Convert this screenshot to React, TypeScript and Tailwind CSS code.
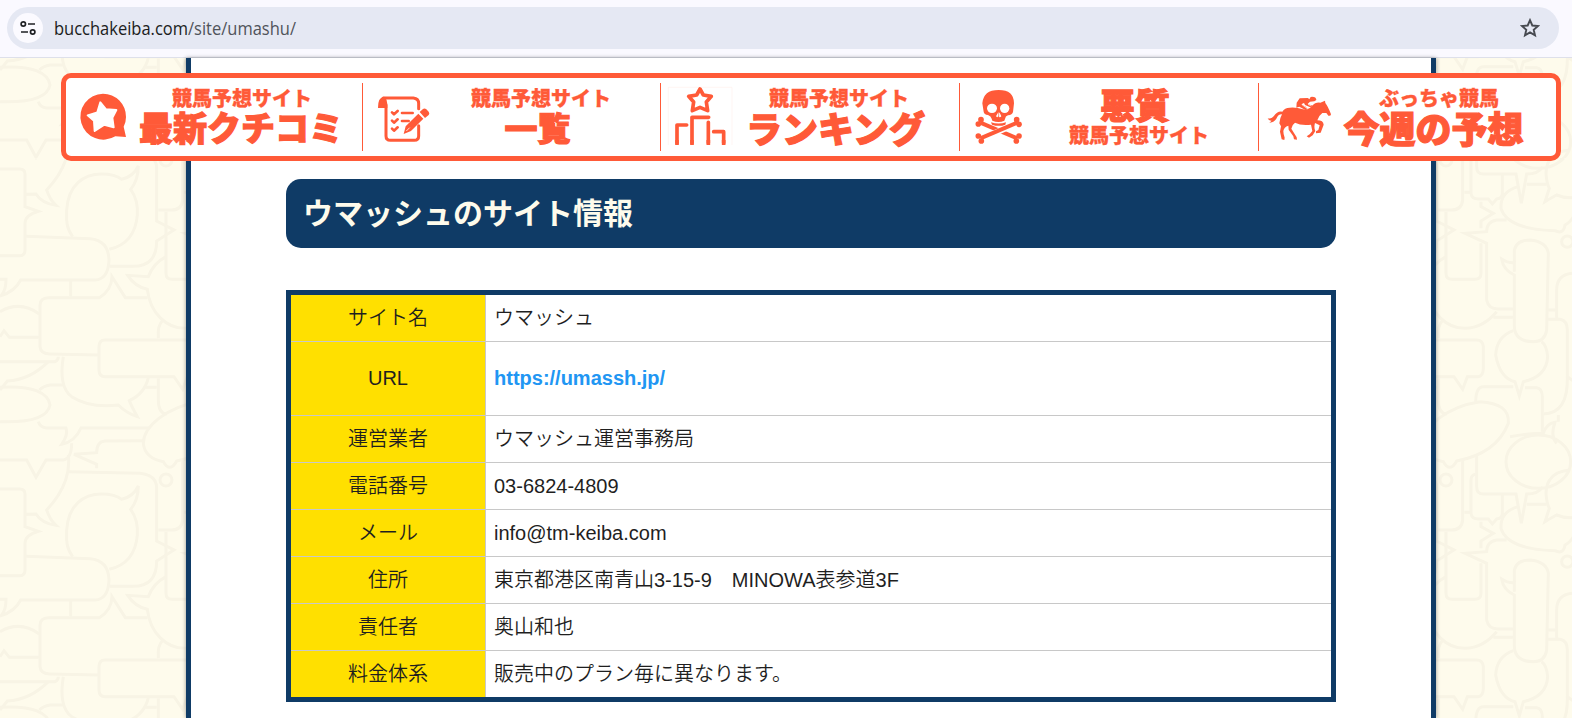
import type { ReactNode } from "react";

type NavItem = {
  width: string;
  icon: ReactNode;
  lines: ReactNode;
};

type InfoRow = {
  label: string;
  value: string;
  link?: boolean;
};

const rows: InfoRow[] = [
  { label: "サイト名", value: "ウマッシュ" },
  { label: "URL", value: "https://umassh.jp/", link: true },
  { label: "運営業者", value: "ウマッシュ運営事務局" },
  { label: "電話番号", value: "03-6824-4809" },
  { label: "メール", value: "info@tm-keiba.com" },
  { label: "住所", value: "東京都港区南青山3-15-9　MINOWA表参道3F" },
  { label: "責任者", value: "奥山和也" },
  { label: "料金体系", value: "販売中のプラン毎に異なります。" },
];

const bubblePaths = [
  "M0 27H60Q75 27 75 42V140L115 154Q75 165 75 190V270Q75 287 60 287H0",
  "M205 -75Q215 10 140 90Q150 120 168 136Q125 130 108 102L78 103",
  "M218 230C195 200 200 170 200 150C205 75 250 42 305 42Q345 42 365 58Q400 50 415 18Q415 60 392 88Q415 120 412 165Q405 250 328 268",
  "M78 229L270 236Q325 240 327 300Q325 358 285 360H62Q45 395 0 408M0 358H18Q18 390 5 405",
  "M212 362V410",
  "M443 413H376L336 350Q335 390 298 413H145Q120 414 120 435V560Q122 582 150 582L296 585",
  "M205 -25L420 -20Q470 -15 470 25V183L522 210L470 243Q470 319 400 319H328",
  "M548 -60V120Q545 150 515 150H475",
  "M498 155V340Q498 358 515 358H585Q603 358 603 340V250",
  "M498 290Q460 310 445 350L383 346Q405 380 442 388C450 460 500 505 555 505Q610 503 650 455",
  "M475 535Q472 495 488 482",
  "M565 540H315Q297 540 297 560V630Q297 650 315 650H522L548 688L562 650H595Q610 648 610 625V560Q608 540 590 540H560",
  "M190 590Q175 680 215 710Q270 745 355 735Q380 760 412 770Q395 740 388 722Q435 700 445 652",
  "M0 605H165Q175 600 175 590",
  "M0 455Q60 420 118 462M0 530L12 512L28 532H118",
  "M145 605Q90 660 22 663L0 690",
  "M0 682C100 675 145 700 150 735Q140 790 0 785",
  "M190 675H150Q130 678 118 690M115 785Q120 803 140 804H198Q205 825 185 853Q225 845 243 804H450",
  "M435 682H470M475 655V720Q475 760 500 762",
  "M600 725C500 740 430 800 430 850Q435 895 490 905Q510 940 530 903Q650 880 685 790Q690 730 600 725",
  "M430 842L315 843Q290 845 290 878L222 883L290 913V925",
  "M0 900H80L108 952L138 900H190Q215 895 215 850",
  "M590 -75V20Q590 42 610 42H708L724 130L740 42Q775 42 788 20",
  "M588 -18Q573 -15 573 0V100Q575 117 595 117H625L637 132L650 117Q667 115 667 100V42M570 97H553",
  "M715 80Q660 95 663 145C680 200 760 210 825 212Q850 225 855 195Q885 180 900 120M740 73H800",
  "M870 -30Q800 -25 798 40Q800 70 808 85L795 125Q820 110 830 105Q860 118 900 110",
  "M603 125V140L640 160L603 183V205",
  "M680 180H650Q620 185 620 215L555 220L620 250V420Q625 447 655 447H700",
  "M703 330V270Q710 240 750 240Q800 245 805 280L800 510Q795 545 760 545Q705 545 703 500V345Q670 330 665 297Q685 310 703 308V335",
  "M800 450H830M640 472H700",
  "M876 340Q830 345 830 390V478",
  "M800 478H840Q862 482 862 510V650L890 670",
  "M700 512Q650 530 647 585Q660 655 705 665L718 708L730 665Q800 650 803 590Q800 555 785 545",
  "M587 725Q588 680 610 680H700M735 683H770Q787 685 787 710V815",
  "M862 650Q865 760 790 762M835 765V785",
  "M690 830Q750 820 790 820Q800 790 825 787Q810 830 830 850",
];

const offsets = [
  [0, 0],
  [0, 960],
  [0, -960],
];

function BubbleBackdrop() {
  return (
    <svg className="absolute inset-0 h-full w-full" aria-hidden="true">
      <defs>
        <g id="bubbles" fill="none" stroke="#f8f4e5" strokeWidth="9">
          {bubblePaths.map((d) => (
            <path key={d} d={d} />
          ))}
          <circle cx="498" cy="0" r="18" />
          <circle cx="862" cy="245" r="17" />
          <ellipse cx="775" cy="-55" rx="97" ry="80" />
        </g>
        <pattern
          id="tile"
          width="960"
          height="960"
          patternUnits="userSpaceOnUse"
          patternTransform="translate(0 102) scale(0.33333)"
        >
          {offsets.map(([x, y]) => (
            <use key={`${x}/${y}`} href="#bubbles" x={x} y={y} />
          ))}
        </pattern>
      </defs>
      <rect width="100%" height="100%" fill="url(#tile)" />
    </svg>
  );
}

function ReviewIcon() {
  return (
    <svg viewBox="198 249 180 204" className="h-[68px] w-[60px] shrink-0 overflow-visible">
      <path
        fill="#ff5a38"
        d="M309 281A69 69 0 0 1 378 351Q378 367 371 380L378 411L346 409A69 69 0 1 1 309 281Z"
      />
      <path
        fill="#fff"
        stroke="#fff"
        strokeWidth="6"
        strokeLinejoin="round"
        d="M301 307L318 328L349 330L337 353L341 382L313 374L284 393L282 362L263 346L292 337Z"
      />
    </svg>
  );
}

function ListIcon() {
  return (
    <svg viewBox="9 69 186 204" className="h-[68px] w-[62px] shrink-0 overflow-visible">
      <g fill="none" stroke="#ff5a38" strokeLinecap="round" strokeLinejoin="round">
        <path
          strokeWidth="9"
          d="M70 114H160Q176 116 176 130V146M78 135V228Q78 241 91 241H163Q176 241 176 228V197"
        />
        <path
          strokeWidth="8"
          d="M96 157L102 163L113 153M126 159H158M96 182L102 188L113 178M126 183H146M96 206L102 212L113 202"
        />
      </g>
      <path fill="#ff5a38" d="M54 144Q53 112 72 110Q83 114 82 144Z" />
      <path
        fill="#ff5a38"
        d="M131 222L137 199L175 161L190 176L153 213ZM179 156L189 147Q194 144 199 148L206 155Q210 160 206 165L195 174Z"
      />
      <path stroke="#fff" strokeWidth="2.5" d="M139 213L149 203" />
    </svg>
  );
}

function RankingIcon() {
  return (
    <svg viewBox="33 69 186 204" className="h-[68px] w-[62px] shrink-0 overflow-visible">
      <path fill="none" stroke="#fff0ed" strokeWidth="2" d="M55 255V82H246V255" />
      <g fill="none" stroke="#ff5a38" strokeLinejoin="round">
        <path
          strokeWidth="11"
          d="M150 87L160 105L184 109L169 126L173 152L150 142L127 152L131 126L116 109L140 105Z"
        />
        <path strokeWidth="11" strokeLinecap="round" d="M126 249V172H176M175 187V249M81 249V195H110M191 215H221V249" />
        <path strokeWidth="11" d="M126 240V255M175 240V255M81 240V255M221 240V255" />
      </g>
    </svg>
  );
}

function SkullIcon() {
  return (
    <svg viewBox="30 69 189 204" className="h-[68px] w-[63px] shrink-0 overflow-visible">
      <g fill="#ff5a38">
        <path d="M146 90Q192 90 192 130L189 156Q187 165 174 166Q166 168 165 177L163 182Q146 190 127 182L125 176Q123 168 114 165Q102 163 101 155L97 130Q100 90 146 90Z" />
        <path d="M123 187Q146 194 168 187L166 194Q147 201 126 194Z" />
        <circle cx="93" cy="179" r="8.5" />
        <circle cx="85" cy="192" r="8.5" />
        <circle cx="200" cy="179" r="8.5" />
        <circle cx="207" cy="193" r="8.5" />
        <circle cx="85" cy="228" r="8.5" />
        <circle cx="94" cy="243" r="8.5" />
        <circle cx="207" cy="228" r="8.5" />
        <circle cx="199" cy="243" r="8.5" />
      </g>
      <path stroke="#ff5a38" strokeWidth="12" d="M91 188L202 235" />
      <path stroke="#fff" strokeWidth="18" d="M118 226L175 202" />
      <path stroke="#ff5a38" strokeWidth="12" d="M91 235L202 188" />
      <g fill="#fff">
        <ellipse cx="126" cy="145" rx="15" ry="14" />
        <ellipse cx="164" cy="145" rx="14" ry="14" />
        <path d="M144 158L138 169Q142 174 145 169Q149 175 154 169L149 158Z" />
      </g>
      <path stroke="#ff5a38" strokeWidth="2" d="M146 159V172" />
    </svg>
  );
}

function HorseIcon() {
  return (
    <svg viewBox="-9 -21 192 204" className="h-[68px] w-[64px] shrink-0 overflow-visible">
      <g fill="#ff5a38">
        <path d="M17 85Q28 88 35 79Q46 62 61 65Q68 53 83 53Q102 51 123 58Q140 60 151 47Q160 36 175 38L189 32L190 39Q198 49 207 73Q206 79 199 77L193 69L181 69Q170 77 166 91Q184 91 185 104L176 128L162 130L162 124L169 120L173 106L159 99Q155 112 160 123L152 136L141 143L134 139L143 133L151 123L147 104Q118 108 99 98Q89 105 88 116L104 142L105 149L96 148L94 139L80 119L79 107Q66 111 64 123Q64 133 68 143L67 150L59 148L54 125L57 109L52 100Q54 83 60 73Q49 72 43 86Q36 97 22 98L29 92Q20 93 17 85Z" />
        <path d="M103 53L104 38L113 25L137 24L143 28Q143 20 150 20Q163 20 163 30L157 34L144 35L137 42L155 48L150 54L129 45L126 39L118 43L131 50L137 57L130 60L112 50Z" />
      </g>
      <path fill="none" stroke="#fff" strokeWidth="2" d="M120 44L137 57M138 43L148 48" />
    </svg>
  );
}

const smallText =
  "flex h-[22px] items-center justify-center whitespace-nowrap pl-[2px] text-[20px] font-black leading-none [-webkit-text-stroke:0.3px_#ff5a38]";
const bigText =
  "flex h-[36px] items-center justify-center whitespace-nowrap font-black leading-none [-webkit-text-stroke:1.2px_#ff5a38]";

const navItems: NavItem[] = [
  {
    width: "w-[297px] border-r",
    icon: <ReviewIcon />,
    lines: (
      <>
        <span className={smallText}>競馬予想サイト</span>
        <span className={`${bigText} text-[34px]`}>最新クチコミ</span>
      </>
    ),
  },
  {
    width: "w-[298px] border-r",
    icon: <ListIcon />,
    lines: (
      <>
        <span className={smallText}>競馬予想サイト</span>
        <span className={`${bigText} pr-[5px] text-[33px]`}>一覧</span>
      </>
    ),
  },
  {
    width: "w-[299px] border-r",
    icon: <RankingIcon />,
    lines: (
      <>
        <span className={smallText}>競馬予想サイト</span>
        <span className={`${bigText} pr-[5px] text-[36px]`}>ランキング</span>
      </>
    ),
  },
  {
    width: "w-[299px] border-r",
    icon: <SkullIcon />,
    lines: (
      <>
        <span className={`${bigText} -mt-[2px] pr-[6px] text-[35px]`}>悪質</span>
        <span className={`${smallText} mt-[3px]`}>競馬予想サイト</span>
      </>
    ),
  },
  {
    width: "w-[297px]",
    icon: <HorseIcon />,
    lines: (
      <>
        <span className={smallText}>ぶっちゃ競馬</span>
        <span className={`${bigText} pr-[9px] text-[36px]`}>今週の予想</span>
      </>
    ),
  },
];

function AddressBar() {
  return (
    <header className="flex h-[58px] items-start border-b border-[#dee0ea] bg-[#faf9ff] pt-[7px] pl-[7px]">
      <div className="flex h-[42px] w-[1552px] items-center rounded-full bg-[#e5e8f3] pr-[19px] pl-[6px]">
        <div className="flex size-[30px] items-center justify-center rounded-full bg-[#fbfaff]">
          <svg viewBox="0 0 16 16" className="size-4" fill="none" stroke="#1f2024" strokeWidth="1.7">
            <circle cx="3.3" cy="4" r="2.2" />
            <circle cx="12.7" cy="12" r="2.2" />
            <path d="M8 4H15M1 12H8" />
          </svg>
        </div>
        <p className="ml-[11px] grow whitespace-nowrap font-['Open_Sans','Noto_Sans',sans-serif] text-[18px] text-[#50535a]">
          <span className="inline-block origin-left scale-x-[0.916]">
            <span className="text-[#1c1d21]">bucchakeiba.com</span>/site/umashu/
          </span>
        </p>
        <svg viewBox="0 0 20 20" className="size-5" fill="none" stroke="#474a50" strokeWidth="1.9">
          <path d="M10 2.2L12.3 7.5L18 8L13.7 11.8L15 17.4L10 14.4L5 17.4L6.3 11.8L2 8L7.7 7.5Z" />
        </svg>
      </div>
    </header>
  );
}

function SiteNav() {
  return (
    <nav className="absolute top-[15px] left-[61px] flex h-[88px] w-[1500px] items-center rounded-[10px] border-5 border-[#ff5a38] bg-white font-['Noto_Sans_CJK_JP',sans-serif] text-[#ff5a38]">
      {navItems.map((item, index) => (
        <a key={index} className={`flex h-[68px] border-[#ff5a38] ${item.width}`}>
          {item.icon}
          <span className="flex w-[230px] flex-col pt-[4px]">{item.lines}</span>
        </a>
      ))}
    </nav>
  );
}

export default function App() {
  return (
    <div className="flex h-[718px] w-[1572px] flex-col overflow-hidden">
      <AddressBar />
      <div className="relative grow bg-[#fefbec]">
        <BubbleBackdrop />
        <main className="relative ml-[186px] h-full w-[1250px] border-x-5 border-[#0f3b66] bg-white px-[95px] pt-[121px] shadow-[0_0_4px_rgba(0,0,0,0.4)]">
          <h2 className="flex h-[69px] items-center rounded-[15px] bg-[#0f3b66] pb-[5px] pl-[17px] font-['Noto_Sans_CJK_JP',sans-serif] text-[30px] font-bold text-[#fefbec]">
            ウマッシュのサイト情報
          </h2>
          <div className="mt-[42px] divide-y divide-[#c8c8c8] border-5 border-[#0f3b66] font-['Liberation_Sans','Noto_Sans_CJK_JP',sans-serif] text-[20px] font-[350] text-[#1f1f1f]">
            {rows.map((row) => (
              <div key={row.label} className={row.link ? "flex h-[74px]" : "flex h-[47px] last:h-[46px]"}>
                <div className={`flex w-[194px] items-center justify-center bg-[#ffe000] ${row.link ? "pb-[2px]" : ""}`}>
                  {row.label}
                </div>
                <div
                  className={`flex grow items-center border-l border-[#c8c8c8] pl-[8px] ${row.link ? "pb-[2px]" : ""}`}
                >
                  {row.link ? <a className="font-bold text-[#2196f3]">{row.value}</a> : row.value}
                </div>
              </div>
            ))}
          </div>
        </main>
        <SiteNav />
      </div>
    </div>
  );
}
